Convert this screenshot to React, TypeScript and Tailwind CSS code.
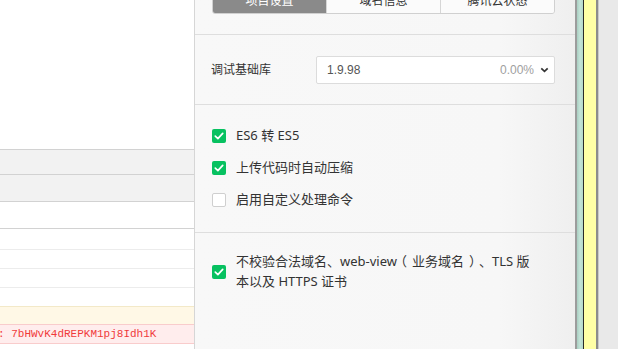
import React from "react";

const font = { fontFamily: '"Noto Sans", "Noto Sans CJK SC", sans-serif' };

function Check({ checked }: { checked: boolean }) {
  if (!checked) {
    return <div className="w-[14px] h-[14px] shrink-0 rounded-[2px] border border-[#cfcfcf] bg-white" />;
  }
  return (
    <div className="w-[14px] h-[14px] shrink-0 rounded-[2px] bg-[#07c160] flex items-center justify-center">
      <svg width="10" height="8" viewBox="0 0 10 8">
        <path d="M1.3 4.2 L3.9 6.6 L8.7 1.4" fill="none" stroke="#fff" strokeWidth="1.7" strokeLinecap="round" strokeLinejoin="round" />
      </svg>
    </div>
  );
}

export default function App() {
  return (
    <div className="w-[618px] h-[349px] overflow-hidden flex bg-white" style={font}>
      {/* left panel */}
      <div className="w-[194px] shrink-0 flex flex-col bg-white">
        <div className="h-[149px] shrink-0" />
        <div className="h-[25px] shrink-0 border-t border-[#d2d2d2] bg-[#f2f2f2]" />
        <div className="h-[27px] shrink-0 border-t border-[#d2d2d2] bg-[#f2f2f2]" />
        <div className="h-[27px] shrink-0 border-t border-[#d2d2d2] bg-white" />
        <div className="h-[21px] shrink-0 border-t border-[#d2d2d2] bg-white" />
        <div className="h-[19px] shrink-0 border-t border-[#ececec] bg-white" />
        <div className="h-[19px] shrink-0 border-t border-[#ececec] bg-white" />
        <div className="h-[19px] shrink-0 border-t border-[#ececec] bg-white" />
        <div className="h-[18px] shrink-0 border-t border-[#f3e9c8] bg-[#fff8e6]" />
        <div className="h-[20px] shrink-0 border-y border-[#f9cccc] bg-[#ffeded] flex items-center overflow-hidden">
          <span
            className="whitespace-pre text-[11px] leading-none text-[#f03a3a] -ml-[2px]"
            style={{ fontFamily: '"Liberation Mono", monospace' }}
          >
            : 7bHWvK4dREPKM1pj8Idh1K
          </span>
        </div>
      </div>

      {/* settings panel */}
      <div className="w-[381px] shrink-0 border-l border-[#d6d6d6] flex flex-col bg-[linear-gradient(to_right,#f8f8f8_0%,#f7f7f7_80%,#efefef_100%)] text-[#333]">
        <div className="h-[35px] shrink-0 border-b border-[#dedede] pl-[17px] pr-[20px]">
          <div className="-mt-[12px] h-[26px] flex border border-[#d0d0d0] rounded-[3px] overflow-hidden text-[12px] leading-none">
            <div className="flex-1 flex items-center justify-center bg-[#8a8a8a] text-white">项目设置</div>
            <div className="flex-1 flex items-center justify-center bg-[#fbfbfb] border-l border-[#d6d6d6]">域名信息</div>
            <div className="flex-1 flex items-center justify-center bg-[#fbfbfb] border-l border-[#d6d6d6]">腾讯云状态</div>
          </div>
        </div>

        <div className="h-[70px] shrink-0 border-b border-[#dedede] flex items-center pl-[16px] pr-[20px]">
          <div className="w-[105px] shrink-0 text-[12px]">调试基础库</div>
          <div
            className="flex-1 h-[28px] bg-white border border-[#dcdcdc] rounded-[2px] flex items-center pl-[10px] pr-[5px] text-[12px]"
            style={{ fontFamily: '"Liberation Sans", sans-serif' }}
          >
            <span className="text-[#555]">1.9.98</span>
            <span className="ml-auto text-[#a0a0a0]">0.00%</span>
            <svg className="ml-[6px]" width="9" height="6" viewBox="0 0 9 6">
              <path d="M1.3 1.3 L4.5 4.4 L7.7 1.3" fill="none" stroke="#333" strokeWidth="1.7" />
            </svg>
          </div>
        </div>

        <div className="h-[128px] shrink-0 border-b border-[#dedede] pt-[15px] pl-[17px] flex flex-col text-[13px]">
          <div className="h-[32px] flex items-center gap-[10px]">
            <Check checked />
            <span>ES6 转 ES5</span>
          </div>
          <div className="h-[32px] flex items-center gap-[10px]">
            <Check checked />
            <span>上传代码时自动压缩</span>
          </div>
          <div className="h-[32px] flex items-center gap-[10px]">
            <Check checked={false} />
            <span>启用自定义处理命令</span>
          </div>
        </div>

        <div className="pt-[19px] pl-[17px] flex items-center gap-[10px] text-[13px] leading-[20px]">
          <Check checked />
          <div className="flex flex-col whitespace-nowrap -mt-[1px]">
            <span>
              不校验合法域名、web-view
              <span className="inline-block -ml-[3px] mr-[5px]">（</span>
              业务域名
              <span className="inline-block ml-[5px] -mr-[3px]">）</span>
              、TLS 版
            </span>
            <span>本以及 HTTPS 证书</span>
          </div>
        </div>
      </div>

      {/* right strip */}
      <div className="flex-1 flex">
        <div className="w-[2px] bg-[#9c9c9c]" />
        <div className="w-[6px] bg-[linear-gradient(to_right,#a9cfc2,#c4e3d8,#b5d8cb)]" />
        <div className="w-[1px] bg-[#2a2a2a]" />
        <div className="w-[12px] bg-[#ffffa6]" />
        <div className="w-[2px] bg-[#8c8c8c]" />
        <div className="w-[1px] bg-[#c9c9c9]" />
        <div className="flex-1 bg-[#e9e9e9]" />
      </div>
    </div>
  );
}
